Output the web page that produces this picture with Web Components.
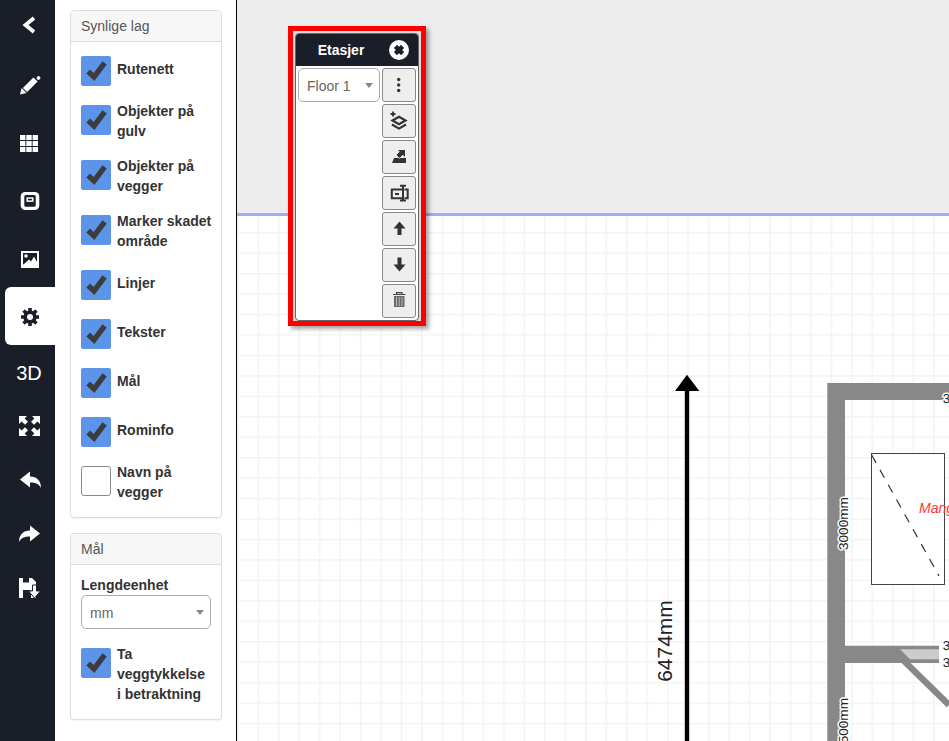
<!DOCTYPE html>
<html lang="no">
<head>
<meta charset="utf-8">
<title>Etasjer</title>
<style>
  html, body { margin: 0; padding: 0; height: 100%; overflow: hidden; background: #fff; }
  body { font-family: "Liberation Sans", Arial, sans-serif; }
</style>
</head>
<body>

<app-shell>
  <nav-rail slot="rail">
    <rail-item style="height:56px">
      <svg viewBox="0 0 55 58" width="55" height="58"><path d="M34 18 L25.5 25 L34 32" fill="none" stroke="#fff" stroke-width="3.8"/></svg>
    </rail-item>
    <rail-item>
      <svg viewBox="0 0 55 58" width="55" height="58"><g transform="translate(0,-56)"><path d="M25 90 L35.5 79.5" stroke="#fff" stroke-width="6" fill="none"/><path d="M36.8 78 L38.6 76 L40.2 78 L38.4 80 Z" fill="#fff" stroke="#fff"/><path d="M20 94.5 L21.6 88 L26.6 93 Z" fill="#fff"/></g></svg>
    </rail-item>
    <rail-item>
      <svg viewBox="0 0 55 58" width="55" height="58"><g transform="translate(0,-114)" fill="#fff"><rect x="20" y="135" width="5.4" height="5"/><rect x="26.3" y="135" width="5.4" height="5"/><rect x="32.6" y="135" width="5.4" height="5"/><rect x="20" y="141" width="5.4" height="5"/><rect x="26.3" y="141" width="5.4" height="5"/><rect x="32.6" y="141" width="5.4" height="5"/><rect x="20" y="147" width="5.4" height="5"/><rect x="26.3" y="147" width="5.4" height="5"/><rect x="32.6" y="147" width="5.4" height="5"/></g></svg>
    </rail-item>
    <rail-item>
      <svg viewBox="0 0 55 58" width="55" height="58"><g transform="translate(0,-172)"><rect x="20.7" y="192" width="18.6" height="18" rx="4.5" fill="#fff"/><rect x="24.3" y="195" width="11.4" height="11.7" rx="1.5" fill="#1a1e28"/><rect x="26.5" y="197.3" width="7" height="4.6" fill="#fff"/><rect x="28" y="198.8" width="4" height="1.6" fill="#1a1e28"/></g></svg>
    </rail-item>
    <rail-item style="height:57px">
      <svg viewBox="0 0 55 58" width="55" height="58"><g transform="translate(0,-230)"><rect x="21" y="251" width="18" height="17" fill="#fff"/><rect x="23" y="253" width="14" height="11.5" fill="#1a1e28"/><circle cx="26" cy="256" r="1.8" fill="#fff"/><path d="M23 265 L29 259.5 L31 261.5 L34 256.5 L37 262 V266 H23 Z" fill="#fff"/></g></svg>
    </rail-item>
    <rail-item active>
      <svg viewBox="0 0 55 58" width="55" height="58"><g transform="translate(0,-287)" stroke="#1a1e28" stroke-width="3.6"><path d="M30 308 V326 M21 317 H39 M23.6 310.6 L36.4 323.4 M36.4 310.6 L23.6 323.4"/><circle cx="30" cy="317" r="6.6" fill="#1a1e28" stroke="none"/><circle cx="30" cy="317" r="3" fill="#fff" stroke="none"/></g></svg>
    </rail-item>
    <rail-item text>3D</rail-item>
    <rail-item short>
      <svg viewBox="0 0 55 54" width="55" height="54"><g transform="translate(0,-400)" fill="#fff"><path d="M19 416 H27 L24.6 418.4 L28 421.8 L25 424.8 L21.6 421.4 L19 424 Z"/><path d="M40 416 H32 L34.4 418.4 L31 421.8 L34 424.8 L37.4 421.4 L40 424 Z"/><path d="M19 436 H27 L24.6 433.6 L28 430.2 L25 427.2 L21.6 430.6 L19 428 Z"/><path d="M40 436 H32 L34.4 433.6 L31 430.2 L34 427.2 L37.4 430.6 L40 428 Z"/></g></svg>
    </rail-item>
    <rail-item short>
      <svg viewBox="0 0 55 54" width="55" height="54"><g transform="translate(0,-454)"><path d="M20 479.5 L30 471.5 V476.5 C37 476.5 41 481 41 488 C39 484 36 482.5 30 482.5 V487.5 Z" fill="#fff"/></g></svg>
    </rail-item>
    <rail-item short>
      <svg viewBox="0 0 55 54" width="55" height="54"><g transform="translate(0,-508)"><path d="M40 533.5 L30 525.5 V530.5 C23 530.5 19 535 19 542 C21 538 24 536.5 30 536.5 V541.5 Z" fill="#fff"/></g></svg>
    </rail-item>
    <rail-item short>
      <svg viewBox="0 0 55 54" width="55" height="54"><g transform="translate(0,-562)"><path d="M19 578 H32 L36 582 V598 H19 Z" fill="#fff"/><rect x="23" y="578" width="6" height="4.5" fill="#1a1e28"/><rect x="23" y="590" width="8" height="8" fill="#1a1e28"/><path d="M32.5 585 H36.5 V591 H40.5 L34.5 598 L28.5 591 H32.5 Z" fill="#fff" stroke="#1a1e28" stroke-width="1"/></g></svg>
    </rail-item>
  </nav-rail>

  <side-panel slot="panel">
    <panel-card heading="Synlige lag">
      <check-row checked>Rutenett</check-row>
      <check-row checked>Objekter på gulv</check-row>
      <check-row checked>Objekter på vegger</check-row>
      <check-row checked>Marker skadet område</check-row>
      <check-row checked>Linjer</check-row>
      <check-row checked>Tekster</check-row>
      <check-row checked>Mål</check-row>
      <check-row checked>Rominfo</check-row>
      <check-row>Navn på vegger</check-row>
    </panel-card>
    <panel-card heading="Mål">
      <field-label>Lengdeenhet</field-label>
      <select-box wide>mm</select-box>
      <check-row checked>Ta veggtykkelse<br>i betraktning</check-row>
    </panel-card>
  </side-panel>

  <plan-canvas slot="canvas">
    <floor-window heading="Etasjer">
      <select-box slot="list">Floor 1</select-box>
      <tool-button slot="tools">
        <svg viewBox="1 1 32 32" width="32" height="32"><g fill="#333"><circle cx="16.7" cy="11.5" r="1.7"/><circle cx="16.7" cy="17" r="1.7"/><circle cx="16.7" cy="22.5" r="1.7"/></g></svg>
      </tool-button>
      <tool-button slot="tools">
        <svg viewBox="1 1 32 32" width="32" height="32"><g fill="none" stroke="#333" stroke-width="2.2"><path d="M8.5 10 H13.5 M11 7.5 V12.5" stroke-width="1.8"/><path d="M10.5 16.5 L17 12.8 L23.5 16.5 L17 20.2 Z"/><path d="M10 20.5 L17 24.6 L24 20.5"/></g></svg>
      </tool-button>
      <tool-button slot="tools">
        <svg viewBox="1 1 32 32" width="32" height="32"><path d="M10 23 L12 18 H24 V23 Z" fill="#333"/><path d="M15 9.5 H23.5 V18 L20.8 15.3 L17.6 18.5 L14 14.9 L17.2 11.7 Z" fill="#333" stroke="#eee" stroke-width="1"/></svg>
      </tool-button>
      <tool-button slot="tools">
        <svg viewBox="1 1 32 32" width="32" height="32"><g fill="none" stroke="#333" stroke-width="2"><path d="M20 13.5 H9.8 V22.3 H20"/><path d="M13 18 H17"/><path d="M18 9.8 H24 M18 24.6 H24 M21 10 V24.5"/><path d="M22.5 13.5 H25.7 V22.3 H22.5"/></g></svg>
      </tool-button>
      <tool-button slot="tools">
        <svg viewBox="1 1 32 32" width="32" height="32"><path d="M17.5 9.5 L23.5 16.5 H19.5 V23 H15.5 V16.5 H11.5 Z" fill="#333"/></svg>
      </tool-button>
      <tool-button slot="tools">
        <svg viewBox="1 1 32 32" width="32" height="32"><path d="M17.5 23.5 L23.5 16.5 H19.5 V9.5 H15.5 V16.5 H11.5 Z" fill="#333"/></svg>
      </tool-button>
      <tool-button slot="tools">
        <svg viewBox="1 1 32 32" width="32" height="32"><path d="M11 10.5 H23.5 M14.5 10 V8.7 H20 V10" fill="none" stroke="#444" stroke-width="1.2"/><rect x="12" y="12" width="10.5" height="11" fill="#6a6a6a"/><path d="M14.5 13 V22 M17.2 13 V22 M20 13 V22" stroke="#c4c4c4" stroke-width="0.9"/></svg>
      </tool-button>
    </floor-window>
  </plan-canvas>
</app-shell>

<script>
function shadow(el, html) {
  el.attachShadow({mode: 'open'}).innerHTML = html;
}

class AppShell extends HTMLElement {
  constructor() {
    super();
    shadow(this, `
      <style>
        :host { display: flex; width: 100%; height: 741px; overflow: hidden; color: #333; font: 14px/20px "Liberation Sans", Arial, sans-serif; }
      </style>
      <slot name="rail"></slot>
      <slot name="panel"></slot>
      <slot name="canvas"></slot>
    `);
  }
}

class NavRail extends HTMLElement {
  constructor() {
    super();
    shadow(this, `
      <style>
        :host { display: flex; flex-direction: column; flex: none; width: 55px; background: #1a1e28; }
      </style>
      <slot></slot>
    `);
  }
}

class RailItem extends HTMLElement {
  constructor() {
    super();
    shadow(this, `
      <style>
        :host { display: block; flex: none; height: 58px; overflow: hidden; color: #fff; font-size: 20px; line-height: 57px; text-align: center; box-sizing: border-box; }
        :host([short]) { height: 54px; }
        :host([text]) { height: 55px; line-height: 56px; padding-left: 3px; }
        :host([active]) { background: #fff; margin-left: 5px; border-radius: 6px 0 0 6px; }
        :host([active]) ::slotted(svg) { margin-left: -5px; }
        ::slotted(svg) { display: block; }
      </style>
      <slot></slot>
    `);
  }
}

class SidePanel extends HTMLElement {
  constructor() {
    super();
    shadow(this, `
      <style>
        :host { display: flex; flex-direction: column; gap: 15px; flex: none; box-sizing: border-box; width: 182px; padding: 10px 14px 0 15px; background: #fff; border-right: 1px solid #000; }
      </style>
      <slot></slot>
    `);
  }
}

class PanelCard extends HTMLElement {
  constructor() {
    super();
    shadow(this, `
      <style>
        :host { display: block; border: 1px solid #ddd; border-radius: 4px; background: #fff; box-shadow: 0 1px 1px rgba(0,0,0,.05); }
        header { height: 30px; line-height: 30px; padding: 0 10px; background: #f7f7f7; border-bottom: 1px solid #ddd; border-radius: 3px 3px 0 0; color: #555; }
        .body { padding: 10px 10px 0; }
      </style>
      <header></header>
      <div class="body"><slot></slot></div>
    `);
    this.shadowRoot.querySelector('header').textContent = this.getAttribute('heading');
  }
}

class CheckRow extends HTMLElement {
  constructor() {
    super();
    shadow(this, `
      <style>
        :host { display: flex; align-items: center; gap: 6px; min-height: 34px; margin-bottom: 15px; width: 136px; font-weight: bold; color: #333; }
        .box { flex: none; align-self: flex-start; box-sizing: border-box; width: 30px; height: 30px; margin-top: 4px; border-radius: 2px; }
        :host([checked]) .box { background: #5b94e8; }
        :host(:not([checked])) .box { background: #fff; border: 1px solid #8a8a8a; border-radius: 3px; }
        :host(:not([checked])) svg { display: none; }
        svg { display: block; }
        .text { flex: 1; min-width: 0; }
      </style>
      <span class="box"><svg viewBox="0 0 30 30" width="30" height="30"><path d="M7.2 15.6 L13 21 L23.6 6.8" fill="none" stroke="#3c3c3f" stroke-width="5.4"/></svg></span>
      <span class="text"><slot></slot></span>
    `);
  }
}

class FieldLabel extends HTMLElement {
  constructor() {
    super();
    shadow(this, `
      <style>
        :host { display: block; font-weight: bold; color: #333; }
      </style>
      <slot></slot>
    `);
  }
}

class SelectBox extends HTMLElement {
  constructor() {
    super();
    shadow(this, `
      <style>
        :host { display: flex; align-items: center; box-sizing: border-box; height: 34px; padding: 1px 6px 0 8px; background: #fff; border: 1px solid #aaa; border-radius: 5px; color: #666; }
        :host([wide]) { margin-bottom: 15px; }
        .text { flex: 1; }
        .arrow { width: 0; height: 0; margin-top: -1px; border: 4px solid transparent; border-top: 5px solid #888; border-bottom: 0; }
      </style>
      <span class="text"><slot></slot></span>
      <span class="arrow"></span>
    `);
  }
}

class PlanCanvas extends HTMLElement {
  constructor() {
    super();
    shadow(this, `
      <style>
        :host { display: block; position: relative; flex: 1; min-width: 0; height: 741px; overflow: hidden; background: #fff; }
        svg { display: block; }
        text { font-family: "Liberation Sans", Arial, sans-serif; }
        .dim { font-size: 13.6px; fill: #222; paint-order: stroke; stroke: #fff; stroke-width: 3px; stroke-linejoin: round; }
      </style>
      <svg width="712" height="741" viewBox="237 0 712 741">
        <defs>
          <pattern id="grid" patternUnits="userSpaceOnUse" x="257.5" y="232" width="20.47" height="20.45">
            <path d="M0 0 V20.45 M0 0 H20.47" stroke="#f3f3f3" stroke-width="3" fill="none"/>
          </pattern>
        </defs>
        <rect x="237" y="216" width="712" height="525" fill="url(#grid)"/>
        <rect x="237" y="0" width="712" height="213" fill="#ededed"/>
        <rect x="237" y="213" width="712" height="3" fill="#93b5ec"/>

        <path d="M687 391 V741" stroke="#000" stroke-width="4.4"/>
        <path d="M687 374.7 L699.3 391 H675 Z" fill="#000"/>
        <text transform="translate(672,641) rotate(-90)" text-anchor="middle" font-size="21" fill="#222">6474mm</text>

        <path d="M949 383 H827.3 V741 H845 V663 H939 V645.7 H845 V400 H949 Z" fill="#888"/>
        <path d="M900 649.3 H939 V659.3 H910 Z" fill="#ccc"/>
        <path d="M903 660 L949 705" stroke="#888" stroke-width="6.5"/>

        <rect x="871.5" y="453.5" width="73" height="131" fill="#fff" stroke="#444"/>
        <path d="M871.7 455 L939 576" stroke="#333" stroke-width="1.2" stroke-dasharray="9 8" fill="none"/>
        <text x="919" y="513" font-size="14" font-style="italic" fill="#f33">Mangel</text>

        <text class="dim" transform="translate(848,550) rotate(-90)">3000mm</text>
        <text class="dim" transform="translate(848,698) rotate(-90)" text-anchor="end">2500mm</text>
        <text class="dim" x="942.7" y="403">3</text>
        <text class="dim" x="942.7" y="650">3</text>
        <text class="dim" x="942.7" y="667">3</text>
      </svg>
      <slot></slot>
    `);
  }
}

class FloorWindow extends HTMLElement {
  constructor() {
    super();
    shadow(this, `
      <style>
        :host { position: absolute; left: 51px; top: 26px; box-sizing: border-box; width: 138px; height: 300px; padding: 2px 2px 0; background: #ddd; border: 5px solid #f00; box-shadow: 3px 3px 4px rgba(0,0,0,.35); }
        .win { display: flex; flex-direction: column; height: 100%; box-sizing: border-box; background: #fff; border: 1px solid #666; border-radius: 4px; overflow: hidden; }
        header { display: flex; align-items: center; flex: none; height: 32px; background: #1a1e28; color: #fff; font-weight: bold; }
        .title { flex: 1; text-align: center; padding-right: 3px; }
        .close { margin-right: 9px; }
        .close svg { display: block; }
        .main { flex: 1; display: flex; gap: 2px; padding: 2px 2px 0; }
        .list { flex: 1; min-width: 0; }
        .tools { display: flex; flex-direction: column; gap: 2px; flex: none; width: 34px; }
      </style>
      <div class="win">
        <header>
          <span class="title"></span>
          <span class="close"><svg viewBox="0 0 20 20" width="20" height="20"><circle cx="10" cy="10" r="10" fill="#fff"/><path d="M6.4 6.4 L13.6 13.6 M13.6 6.4 L6.4 13.6" stroke="#1a1e28" stroke-width="4.4"/></svg></span>
        </header>
        <div class="main">
          <div class="list"><slot name="list"></slot></div>
          <div class="tools"><slot name="tools"></slot></div>
        </div>
      </div>
    `);
    this.shadowRoot.querySelector('.title').textContent = this.getAttribute('heading');
  }
}

class ToolButton extends HTMLElement {
  constructor() {
    super();
    shadow(this, `
      <style>
        :host { display: block; box-sizing: border-box; width: 34px; height: 34px; background: #eee; border: 1px solid #888; border-radius: 3px; }
        ::slotted(svg) { display: block; }
      </style>
      <slot></slot>
    `);
  }
}

customElements.define('app-shell', AppShell);
customElements.define('nav-rail', NavRail);
customElements.define('rail-item', RailItem);
customElements.define('side-panel', SidePanel);
customElements.define('panel-card', PanelCard);
customElements.define('check-row', CheckRow);
customElements.define('field-label', FieldLabel);
customElements.define('select-box', SelectBox);
customElements.define('plan-canvas', PlanCanvas);
customElements.define('floor-window', FloorWindow);
customElements.define('tool-button', ToolButton);
</script>
</body>
</html>
